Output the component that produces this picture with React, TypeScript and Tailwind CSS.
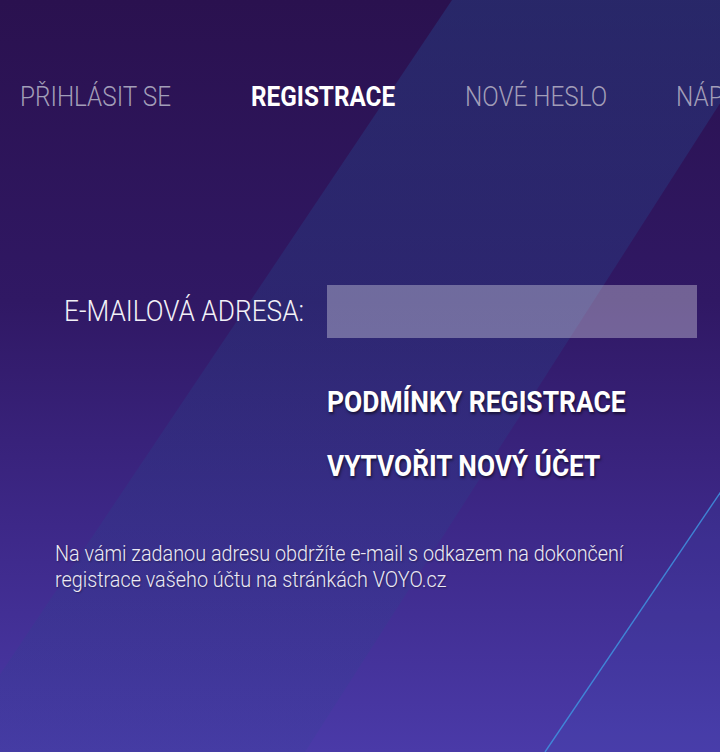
import React from 'react'

const tabs = [
  {label: 'PŘIHLÁSIT SE', active: false, width: 'w-[231px]'},
  {label: 'REGISTRACE', active: true, width: 'w-[214px]'},
  {label: 'NOVÉ HESLO', active: false, width: 'w-[211px]'},
  {label: 'NÁPOVĚDA', active: false, width: 'w-[200px]'},
]

function Backdrop() {
  return (
    <svg className="pointer-events-none absolute inset-0" width="720" height="752" viewBox="0 0 720 752">
      <defs>
        <linearGradient id="band" x1="0" y1="0" x2="0" y2="1">
          <stop offset="0" stopColor="rgb(38,70,140)" stopOpacity="0.42" />
          <stop offset="1" stopColor="rgb(38,70,140)" stopOpacity="0.14" />
        </linearGradient>
      </defs>
      <polygon points="452,0 786,0 305,752 -52,752" fill="url(#band)" />
      <polygon points="720,493 720,752 545,752" fill="rgb(60,90,190)" fillOpacity="0.12" />
      <line x1="722" y1="490" x2="545" y2="752" stroke="#3f93e0" strokeWidth="1.4" strokeOpacity="0.85" />
    </svg>
  )
}

export default function App() {
  return (
    <div
      className="relative h-[752px] w-[720px] overflow-hidden bg-[linear-gradient(to_bottom,#2a114f_0%,#301864_40%,#3d2888_70%,#4a3aa8_100%)]"
      style={{fontFamily: 'Roboto, "Noto Sans", sans-serif'}}
    >
      <Backdrop />

      <div className="relative flex flex-col">
        <nav className="flex whitespace-nowrap pl-[20px] pt-[84px]">
          {tabs.map((tab) => (
            <div key={tab.label} className={`${tab.width} shrink-0`}>
              <span
                className={`inline-block origin-left scale-x-[0.9] text-[27px] leading-none ${
                  tab.active ? 'font-bold text-white' : 'font-light text-[#a29eb8]'
                }`}
              >
                {tab.label}
              </span>
            </div>
          ))}
        </nav>

        <div className="mt-[172px] flex items-center pl-[64px]">
          <div className="w-[263px] shrink-0 whitespace-nowrap">
            <span className="inline-block origin-left scale-x-[0.875] text-[30px] font-light leading-none text-[#f2f1f7]">
              E-MAILOVÁ ADRESA:
            </span>
          </div>
          <input
            type="email"
            className="h-[53px] w-[370px] bg-white/[0.32] px-3 text-[22px] text-white outline-none"
          />
        </div>

        <div className="ml-[327px] mt-[50px] whitespace-nowrap">
          <span className="inline-block origin-left scale-x-[0.912] text-[29px] font-bold leading-none text-white [text-shadow:1px_2px_3px_rgba(0,0,0,0.55)]">
            PODMÍNKY REGISTRACE
          </span>
        </div>

        <div className="ml-[327px] mt-[33px] whitespace-nowrap">
          <span className="inline-block origin-left scale-x-[0.905] text-[29px] font-bold leading-none text-white [text-shadow:1px_2px_3px_rgba(0,0,0,0.55)]">
            VYTVOŘIT NOVÝ ÚČET
          </span>
        </div>

        <div className="ml-[55px] mt-[58px] whitespace-nowrap">
          <p className="inline-block origin-left scale-x-[0.9] text-[22px] font-light leading-[26px] text-[#eceaf4] [text-shadow:1px_1px_2px_rgba(0,0,0,0.35)]">
            Na vámi zadanou adresu obdržíte e-mail s odkazem na dokončení
            <br />
            registrace vašeho účtu na stránkách VOYO.cz
          </p>
        </div>
      </div>
    </div>
  )
}
